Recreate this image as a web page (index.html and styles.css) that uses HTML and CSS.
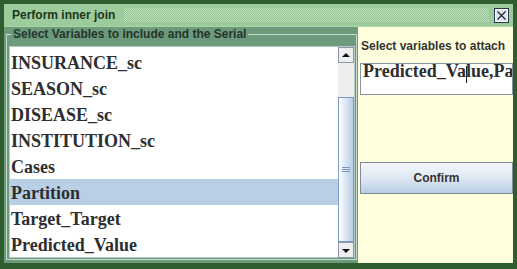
FILE: index.html
```html
<!DOCTYPE html>
<html>
<head>
<meta charset="utf-8">
<link rel="stylesheet" href="styles.css">
</head>
<body>
<div class="frame">
  <div class="titlebar">
    <span class="title">Perform inner join</span>
    <div class="dots"></div>
    <div class="close">
      <svg width="15" height="15" viewBox="0 0 15 15">
        <rect x="0.5" y="0.5" width="14" height="14" fill="#dbe5ee" stroke="#2b3550"/>
        <rect x="1.5" y="1.5" width="12" height="12" fill="none" stroke="#ffffff"/>
        <path d="M3.5 3.5 L11.5 11.5 M11.5 3.5 L3.5 11.5" stroke="#1e2438" stroke-width="1.2" fill="none"/>
      </svg>
    </div>
  </div>
  <div class="body">
    <div class="left">
      <fieldset class="group">
        <legend class="legend">Select Variables to include and the Serial</legend>
        <div class="listbox">
          <div class="viewport">
            <div class="row first">REGION_sc</div>
            <div class="row">INSURANCE_sc</div>
            <div class="row">SEASON_sc</div>
            <div class="row">DISEASE_sc</div>
            <div class="row">INSTITUTION_sc</div>
            <div class="row">Cases</div>
            <div class="row selected">Partition</div>
            <div class="row">Target_Target</div>
            <div class="row">Predicted_Value</div>
          </div>
          <div class="scrollbar">
            <div class="sbtn"><svg width="14" height="14" viewBox="0 0 14 14"><path d="M3 9 L11 9 L7 5 Z" fill="#111"/></svg></div>
            <div class="track">
              <div class="thumb">
                <div class="grip"></div>
              </div>
            </div>
            <div class="sbtn"><svg width="14" height="14" viewBox="0 0 14 14"><path d="M3 6 L11 6 L7 10 Z" fill="#111"/></svg></div>
          </div>
        </div>
      </fieldset>
    </div>
    <div class="right">
      <div class="label">Select variables to attach</div>
      <div class="field"><span class="fieldtext">Predicted_Va<span class="caret"></span>lue,Pa</span></div>
      <div class="button">Confirm</div>
    </div>
  </div>
</div>
</body>
</html>
```
FILE: styles.css
```css
html, body {
  margin: 0;
  padding: 0;
}
body {
  width: 517px;
  height: 269px;
  overflow: hidden;
  font-family: "Liberation Sans", Arial, sans-serif;
}
.frame {
  box-sizing: border-box;
  width: 517px;
  height: 269px;
  background: #2f5d2f;
  padding: 4px 4px 6px 4px;
  display: flex;
  flex-direction: column;
}
.titlebar {
  height: 22px;
  flex: none;
  background: #9ccb9c;
  border-bottom: 1px solid #acd4ac;
  display: flex;
  align-items: center;
}
.title {
  padding: 0 9px 0 8px;
  font-size: 12px;
  font-weight: bold;
  color: #1d361d;
  white-space: nowrap;
}
.dots {
  flex: 1;
  height: 14px;
  background: repeating-conic-gradient(#c2e2c2 0 25%, #90c290 0 50%) 0 0 / 2px 2px;
}
.close {
  width: 15px;
  height: 15px;
  margin: 0 4px 0 5px;
  display: flex;
}
.body {
  flex: 1;
  display: flex;
  min-height: 0;
}
.left {
  width: 354px;
  flex: none;
  background: #6c9a7b;
  display: flex;
}
.group {
  flex: 1;
  margin: 0 1px 3px 2px;
  padding: 4px 1px 1px 2px;
  border: 1px solid #c6dbcd;
  min-width: 0;
  display: flex;
  flex-direction: column;
}
.legend {
  margin-left: 2px;
  padding: 0 2px;
  font-size: 12px;
  font-weight: bold;
  line-height: 15px;
  color: #24352b;
  white-space: nowrap;
}
.listbox {
  flex: 1;
  border: 1px solid #b5cbbd;
  display: flex;
  min-height: 0;
}
.viewport {
  flex: 1;
  background: #ffffff;
  overflow: hidden;
}
.row {
  box-sizing: border-box;
  height: 26px;
  padding: 2px 0 0 1px;
  line-height: 24px;
  font-family: "Liberation Serif", "Times New Roman", serif;
  font-weight: bold;
  font-size: 18px;
  color: #2e2e2e;
  white-space: nowrap;
}
.row.first {
  margin-top: -24px;
}
.row.selected {
  background: #b8cfe5;
}
.scrollbar {
  width: 16px;
  flex: none;
  display: flex;
  flex-direction: column;
  background: #eeeeee;
}
.sbtn {
  height: 14px;
  flex: none;
  border: 1px solid #8b97a6;
  background: #eeeeee;
  display: flex;
}
.track {
  flex: 1;
  padding-top: 34px;
  display: flex;
  flex-direction: column;
}
.thumb {
  height: 143px;
  border: 1px solid #7a99c4;
  background: linear-gradient(to right, #ffffff, #dce7f3 45%, #b8cde6);
  display: flex;
  align-items: center;
  justify-content: center;
}
.grip {
  width: 8px;
  height: 5px;
  background: repeating-linear-gradient(to bottom, #7a95bd 0 1px, transparent 1px 2px);
}
.right {
  flex: 1;
  min-width: 0;
  background: #ffffdd;
  padding: 12px 0 0 2px;
  display: flex;
  flex-direction: column;
}
.label {
  padding-left: 1px;
  font-size: 12px;
  font-weight: bold;
  line-height: 15px;
  color: #333333;
  white-space: nowrap;
}
.field {
  margin-top: 9px;
  min-width: 0;
  height: 30px;
  border: 1px solid #8593a3;
  background: #ffffff;
  overflow: hidden;
  padding-left: 2px;
  line-height: 14px;
  white-space: nowrap;
}
.fieldtext {
  font-family: "Liberation Serif", "Times New Roman", serif;
  font-weight: bold;
  font-size: 18px;
  color: #2e2e2e;
}
.caret {
  display: inline-block;
  width: 1px;
  height: 17px;
  margin-right: -1px;
  background: #222222;
  vertical-align: -6px;
}
.button {
  margin-top: 67px;
  height: 30px;
  border: 1px solid #7c8b9b;
  background: linear-gradient(to bottom, #f4f7fb, #dfe8f2 50%, #b9cde4);
  display: flex;
  align-items: center;
  justify-content: center;
  font-size: 12px;
  font-weight: bold;
  color: #333333;
}
```
